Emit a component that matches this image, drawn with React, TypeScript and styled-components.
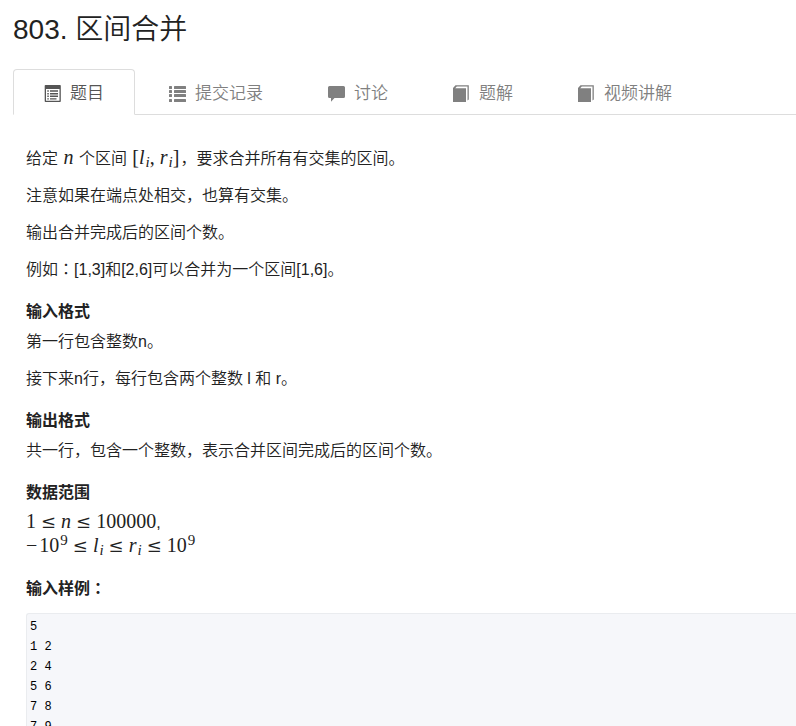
import React from "react";
import styled, { createGlobalStyle } from "styled-components";

const GlobalStyle = createGlobalStyle`
  * { box-sizing: border-box; }
  body {
    margin: 0;
    background: #fff;
    color: #222;
    font: 350 16px/24px "Liberation Sans", "Noto Sans CJK SC", sans-serif;
  }
`;

const Page = styled.main`
  padding: 10px 0 0 13px;
`;

const Title = styled.h1`
  margin: 0;
  font-size: 28px;
  line-height: 40px;
  font-weight: 350;
`;

const TabBar = styled.nav`
  display: flex;
  gap: 3px;
  margin-top: 19px;
  border-bottom: 1px solid #ddd;
`;

const Tab = styled.a<{ $active?: boolean }>`
  display: flex;
  align-items: center;
  gap: 9px;
  height: 46px;
  margin-bottom: -1px;
  padding: 2px 30px 0;
  border: 1px solid ${(p) => (p.$active ? "#ddd" : "transparent")};
  border-bottom-color: ${(p) => (p.$active ? "#fff" : "transparent")};
  border-radius: 4px 4px 0 0;
  color: ${(p) => (p.$active ? "#555" : "#808080")};
  font-size: 17px;
  white-space: nowrap;
  text-decoration: none;
`;

const TabLabel = styled.span`
  padding-top: 2px;
`;

const Icon = styled.svg`
  flex: none;
  width: 17px;
  height: 17px;
  fill: currentColor;
`;

const Statement = styled.article`
  padding: 32px 0 0 13px;
`;

const Paragraph = styled.p`
  margin: 0 0 13px;
`;

const Heading = styled.h4`
  margin: 18px 0 6px;
  font-size: 16px;
  line-height: 24px;
  font-weight: 700;
`;

const SampleHeading = styled(Heading)`
  margin-bottom: 12px;
`;

const ColonMark = styled.span`
  font-family: "Noto Sans CJK JP", sans-serif;
  line-height: 1;
`;

const Formula = styled.span`
  margin: 0 1px;
  font-family: "Liberation Serif", serif;
  font-size: 20px;
  line-height: 20px;
  white-space: nowrap;

  sub, sup {
    font-size: 15px;
    line-height: 0;
  }
  sub {
    margin-left: 1px;
    vertical-align: -3px;
  }
  sup {
    margin-left: 1px;
    vertical-align: 7px;
  }
`;

const FormulaLine = styled(Formula)`
  margin: 0;
`;

const Minus = styled.span`
  margin-right: 2px;
`;

const Relation = styled.span`
  margin: 0 5px;
  font-family: "DejaVu Serif", serif;
  font-size: 18px;
  font-weight: 400;
`;

const Sample = styled.pre`
  margin: 0;
  padding: 3px;
  border: 1px solid #eaecef;
  border-right: 0;
  border-radius: 3px 0 0 3px;
  background: #f6f7fa;
  color: #000;
  font: 12px/20px "Liberation Mono", monospace;
`;

const Le = () => <Relation>≤</Relation>;

const Colon = () => <ColonMark lang="ja">：</ColonMark>;

const ListAltIcon = () => (
  <Icon viewBox="0 0 17 17" aria-hidden="true">
    <path fillRule="evenodd" d="M1.500 0h14.500q.8 0 .8.8v15.400q0 .8-.8.8h-14.500q-.8 0-.8-.8v-15.400q0-.8.8-.8zM2 4v11.700h13.500V4z" />
    <path d="M3.300 5.300h1.500v1.400H3.300zM6 5.300h8v1.400H6zM3.300 8h1.500v1.400H3.300zM6 8h8v1.400H6zM3.300 10.600h1.500V12H3.300zM6 10.600h8V12H6zM3.300 13.200h1.500v1.400H3.300zM6 13.200h6.500v1.400H6z" />
  </Icon>
);

const ListIcon = () => (
  <Icon viewBox="0 0 17 17" aria-hidden="true">
    {[1, 5, 9, 14].map((y) => (
      <React.Fragment key={y}>
        <rect x="0" y={y} width="3" height="3" rx="0.500" />
        <rect x="5" y={y} width="12" height="3" rx="0.500" />
      </React.Fragment>
    ))}
  </Icon>
);

const CommentIcon = () => (
  <Icon viewBox="0 0 17 17" aria-hidden="true">
    <path d="M1.500 1h14q1.500 0 1.500 1.500v9q0 1.500-1.500 1.500H6.500L3 16.700V13H1.500Q0 13 0 11.500v-9Q0 1 1.500 1z" />
  </Icon>
);

const BookIcon = () => (
  <Icon viewBox="0 0 17 17" aria-hidden="true">
    <path d="M0 3L2.500.3H15.800V14.500L14.500 15.500V1.500H3.800L2.200 3.200H13V17H0z" />
  </Icon>
);

const tabs = [
  { label: "题目", icon: <ListAltIcon />, active: true },
  { label: "提交记录", icon: <ListIcon /> },
  { label: "讨论", icon: <CommentIcon /> },
  { label: "题解", icon: <BookIcon /> },
  { label: "视频讲解", icon: <BookIcon /> },
];

const sampleInput = ["5", "1 2", "2 4", "5 6", "7 8", "7 9"].join("\n");

export default function App() {
  return (
    <Page lang="zh-CN">
      <GlobalStyle />
      <Title>803. 区间合并</Title>
      <TabBar>
        {tabs.map((t) => (
          <Tab key={t.label} href="#" $active={t.active} aria-current={t.active ? "page" : undefined}>
            {t.icon}
            <TabLabel>{t.label}</TabLabel>
          </Tab>
        ))}
      </TabBar>
      <Statement>
        <Paragraph>
          给定 <Formula><i>n</i></Formula> 个区间{" "}
          <Formula>[<i>l</i><sub><i>i</i></sub>, <i>r</i><sub><i>i</i></sub>]</Formula>
          ，要求合并所有有交集的区间。
        </Paragraph>
        <Paragraph>注意如果在端点处相交，也算有交集。</Paragraph>
        <Paragraph>输出合并完成后的区间个数。</Paragraph>
        <Paragraph>例如<Colon />[1,3]和[2,6]可以合并为一个区间[1,6]。</Paragraph>

        <Heading>输入格式</Heading>
        <Paragraph>第一行包含整数n。</Paragraph>
        <Paragraph>接下来n行，每行包含两个整数 l 和 r。</Paragraph>

        <Heading>输出格式</Heading>
        <Paragraph>共一行，包含一个整数，表示合并区间完成后的区间个数。</Paragraph>

        <Heading>数据范围</Heading>
        <Paragraph>
          <FormulaLine>1<Le /><i>n</i><Le />100000</FormulaLine>,
          <br />
          <FormulaLine>
            <Minus>−</Minus>10<sup>9</sup><Le /><i>l</i><sub><i>i</i></sub><Le /><i>r</i><sub><i>i</i></sub><Le />10<sup>9</sup>
          </FormulaLine>
        </Paragraph>

        <SampleHeading>输入样例<Colon /></SampleHeading>
        <Sample>{sampleInput}</Sample>
      </Statement>
    </Page>
  );
}
